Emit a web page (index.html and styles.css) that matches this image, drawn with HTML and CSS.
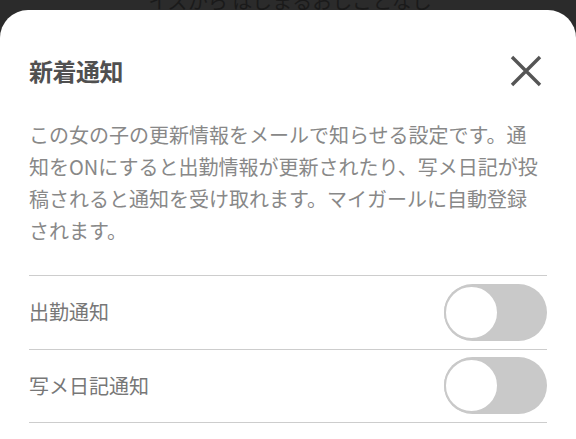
FILE: index.html
```html
<!DOCTYPE html>
<html lang="ja">
<head>
<meta charset="utf-8">
<title>新着通知</title>
<link rel="stylesheet" href="styles.css">
</head>
<body>
<div class="backdrop"><span class="backdrop-text">イズから はじまるおしごとなし</span></div>
<section class="sheet">
  <header class="sheet-header">
    <h1 class="sheet-title">新着通知</h1>
    <button class="close-btn" aria-label="閉じる">
      <svg width="32" height="32" viewBox="0 0 32 32" aria-hidden="true">
        <path d="M2 2 L30 30 M30 2 L2 30" stroke="#555" stroke-width="3.4" stroke-linecap="butt" fill="none"/>
      </svg>
    </button>
  </header>
  <p class="sheet-desc">この女の子の更新情報をメールで知らせる設定です。通知をONにすると出勤情報が更新されたり、写メ日記が投稿されると通知を受け取れます。マイガールに自動登録されます。</p>
  <ul class="setting-list">
    <li class="setting-row">
      <span class="setting-label">出勤通知</span>
      <span class="toggle"><span class="knob"></span></span>
    </li>
    <li class="setting-row">
      <span class="setting-label">写メ日記通知</span>
      <span class="toggle"><span class="knob"></span></span>
    </li>
  </ul>
</section>
</body>
</html>
```

FILE: styles.css
```css
* {
  box-sizing: border-box;
}

html, body {
  margin: 0;
  padding: 0;
  height: 100%;
}

body {
  background: #2b2b2b;
  font-family: "Noto Sans CJK JP", "Noto Sans", sans-serif;
  overflow: hidden;
}

.backdrop {
  height: 10px;
  overflow: hidden;
  display: flex;
  align-items: flex-end;
  justify-content: center;
}

.backdrop-text {
  display: block;
  font-size: 20px;
  line-height: 20px;
  color: #1a1a1a;
  margin-bottom: -1px;
  padding-left: 4px;
}

.sheet {
  background: #ffffff;
  border-radius: 28px 28px 0 0;
  padding: 0 29px;
  height: calc(100% - 10px);
}

.sheet-header {
  display: flex;
  align-items: center;
  justify-content: space-between;
  padding-top: 36px;
  height: 86px;
}

.sheet-title {
  margin: 0;
  font-size: 24px;
  font-weight: 700;
  color: #505050;
  line-height: 1;
  letter-spacing: -0.5px;
}

.close-btn {
  background: none;
  border: 0;
  padding: 0;
  margin-right: 5px;
  width: 32px;
  height: 32px;
  display: block;
}

.close-btn svg {
  display: block;
}

.sheet-desc {
  margin: 23px 8px 28px 0;
  font-size: 20px;
  line-height: 32px;
  color: #888888;
}

.setting-list {
  list-style: none;
  margin: 0;
  padding: 0;
  border-bottom: 1px solid #cdcdcd;
}

.setting-row {
  display: flex;
  align-items: center;
  justify-content: space-between;
  height: 73.5px;
  border-top: 1px solid #cdcdcd;
}

.setting-label {
  font-size: 20px;
  color: #777777;
  line-height: 1;
}

.toggle {
  position: relative;
  display: block;
  width: 103px;
  height: 57px;
  border-radius: 29px;
  background: #c9c9c9;
}

.knob {
  position: absolute;
  left: 0;
  top: 1px;
  width: 55px;
  height: 55px;
  border-radius: 50%;
  background: #ffffff;
  border: 2px solid #c9c9c9;
}
```
